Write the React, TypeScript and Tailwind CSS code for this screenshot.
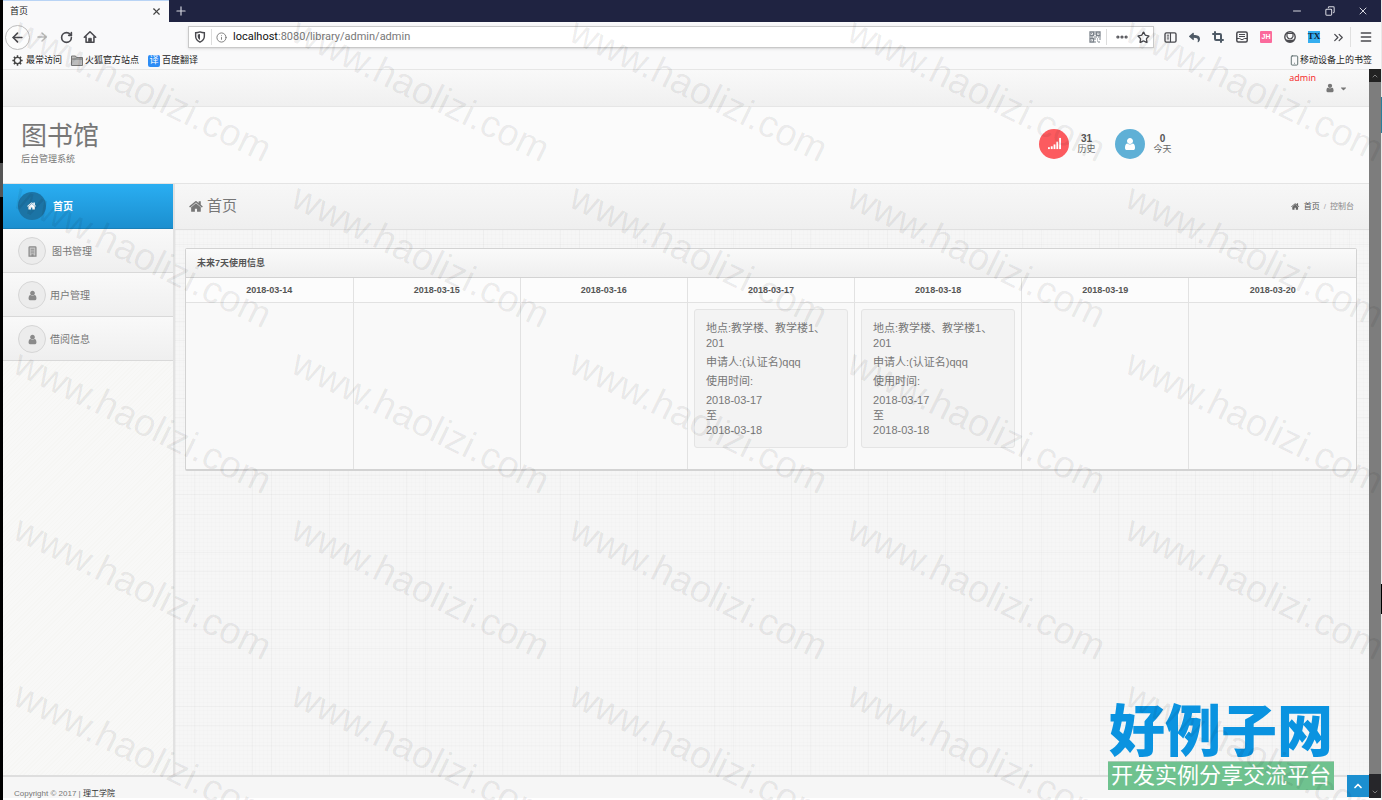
import type { ReactNode } from 'react';
import {
  ArrowLeft,
  ArrowRight,
  ChevronDown,
  ChevronsRight,
  ChevronUp,
  Copy,
  Crop,
  Ellipsis,
  Info,
  Menu,
  Minus,
  Plus,
  RotateCw,
  Smartphone,
  Star,
  X,
} from 'lucide-react';
import { FaCaretDown, FaReply } from 'react-icons/fa';

function HomeGlyph({ className }: { className: string }) {
  return (
    <svg viewBox="0 0 1792 1792" fill="currentColor" className={className} aria-hidden="true">
      <path d="M1408 992v480q0 26-19 45t-45 19h-384v-384h-256v384h-384q-26 0-45-19t-19-45v-480q0-1 .5-3t.5-3l575-474 575 474q1 2 1 6zm223-69l-62 74q-8 9-21 11h-3q-13 0-21-7l-692-577-692 577q-12 8-24 7-13-2-21-11l-62-74q-8-10-7-23.5t11-21.5l719-599q32-26 76-26t76 26l244 204v-195q0-14 9-23t23-9h192q14 0 23 9t9 23v408l219 182q10 8 11 21.5t-7 23.5z" />
    </svg>
  );
}

function UserGlyph({ className }: { className: string }) {
  return (
    <svg viewBox="0 0 1792 1792" fill="currentColor" className={className} aria-hidden="true">
      <path d="M1536 1399q0 109-62.5 187t-150.5 78h-854q-88 0-150.5-78t-62.5-187q0-85 8.5-160.5t31.5-152 58.5-131 94-89 134.5-34.5q131 128 313 128t313-128q76 0 134.5 34.5t94 89 58.5 131 31.5 152 8.5 160.5zm-256-887q0 159-112.5 271.5t-271.5 112.5-271.5-112.5-112.5-271.5 112.5-271.5 271.5-112.5 271.5 112.5 112.5 271.5z" />
    </svg>
  );
}

function SignalGlyph({ className }: { className: string }) {
  return (
    <svg viewBox="0 0 14 12" fill="currentColor" className={className} aria-hidden="true">
      <rect x="0" y="10" width="2" height="2" />
      <rect x="3" y="9" width="2" height="3" />
      <rect x="6" y="7" width="2" height="5" />
      <rect x="9" y="4" width="2" height="8" />
      <rect x="12" y="0" width="2" height="12" />
    </svg>
  );
}

function BookGlyph({ className }: { className: string }) {
  return (
    <svg viewBox="0 0 10 12" className={className} aria-hidden="true">
      <path d="M2 .8h6q.8 0 .8.8v9.6H1.2V1.6q0-.8.8-.8z" fill="#c9c9c9" stroke="currentColor" strokeWidth="1.4" />
      <path d="M3 3.500h4M3 5.500h4M3 7.500h4" stroke="currentColor" />
      <path d="M3.8 9h2.4v2.4H3.8z" fill="currentColor" />
    </svg>
  );
}

function ShieldIcon() {
  return (
    <svg viewBox="0 0 16 16" className="size-3" aria-hidden="true">
      <path d="M8 1.2c2 .8 3.800 1.100 5.800 1.200v4.600c0 3.700-2.300 6.300-5.800 7.800-3.500-1.500-5.800-4.100-5.800-7.800V2.400C4.200 2.300 6 2 8 1.200z" fill="none" stroke="currentColor" strokeWidth="1.900" />
      <path d="M8 4v8c-2-1.100-3-2.700-3-5V4.700z" fill="currentColor" />
    </svg>
  );
}

function HouseIcon() {
  return (
    <svg viewBox="0 0 16 16" className="size-[14px]" fill="none" stroke="currentColor" strokeWidth="1.800" strokeLinecap="round" strokeLinejoin="round" aria-hidden="true">
      <path d="M1.500 8.300L8 2l6.500 6.300M3.500 7.500V14h9V7.500" />
      <path d="M6.500 13.500v-4h3v4z" fill="currentColor" strokeWidth="1" />
    </svg>
  );
}

function GearIcon() {
  return (
    <svg viewBox="0 0 16 16" className="size-[11px]" fill="none" stroke="#444" aria-hidden="true">
      <circle cx="8" cy="8" r="4.600" strokeWidth="2" />
      <path
        d="M8 .5v2.500M8 13v2.500M.5 8H3M13 8h2.500M2.700 2.700l1.800 1.800M11.500 11.500l1.800 1.800M2.700 13.300l1.800-1.800M11.500 4.500l1.800-1.800"
        strokeWidth="2.200"
      />
    </svg>
  );
}

function QrIcon() {
  return (
    <svg viewBox="0 0 12 12" className="size-3" fill="none" stroke="#7b828a" aria-hidden="true">
      <path d="M1 1h3.500v3.500H1zM7.500 1H11v3.500H7.500zM1 7.500h3.500V11H1z" strokeWidth="1.300" />
      <path d="M6 0v4M0 6h4M5 6h3M9 6h3M6 7v2M6 10v2M8 8h1M10 8h2M8 10h1M10 10v2M2.500 2.200v.8M9.200 2.200v.8M2.500 8.800v.8" />
    </svg>
  );
}

function SidebarIcon() {
  return (
    <svg viewBox="0 0 14 12" className="h-[11px] w-[13px]" fill="none" stroke="currentColor" aria-hidden="true">
      <rect x="1" y="1" width="12" height="10" rx="1.500" strokeWidth="1.500" />
      <path d="M7 1v10" strokeWidth="1.200" />
      <path d="M3 3.500h2.500M3 5.500h2.500M3 7.500h2.500" />
    </svg>
  );
}

function ReaderIcon() {
  return (
    <svg viewBox="0 0 12 12" className="size-3" fill="none" stroke="currentColor" aria-hidden="true">
      <rect x=".8" y="1" width="10.400" height="10" rx="1.500" strokeWidth="1.500" />
      <path d="M3 3.500h6M3 5.500h6" />
      <path d="M1 7.500h2.500q2.500 2.500 5 0H11" />
    </svg>
  );
}

function AccountIcon() {
  return (
    <svg viewBox="0 0 12 12" className="size-3" aria-hidden="true">
      <circle cx="6" cy="6" r="5.200" fill="none" stroke="currentColor" strokeWidth="1.400" />
      <path d="M3 2.500h6v3q-1 2.500-3 2.500t-3-2.500z" fill="none" stroke="currentColor" strokeWidth="1.200" />
      <path d="M1.500 8.200q4.500 1.600 9 0L8.600 11H3.400z" fill="currentColor" />
    </svg>
  );
}

function FolderIcon() {
  return (
    <svg viewBox="0 0 12 11" className="h-[11px] w-3" aria-hidden="true">
      <path d="M.5 1h4l1 1.500h6v8H.5z" fill="#bdbdbd" stroke="#777" />
      <path d="M.5 4h11" stroke="#777" />
    </svg>
  );
}

function ToolButton({ label, children }: { label: string; children: ReactNode }) {
  return (
    <button type="button" aria-label={label} className="flex h-6 w-6 items-center justify-center">
      {children}
    </button>
  );
}

function TitleBar() {
  return (
    <div className="flex h-[22px] bg-[#1f2341]">
      <div className="flex w-[166px] items-center justify-between border-t border-[#b9d4f5] bg-[#f9f9fa] pr-[7px] pl-[7px]">
        <span className="text-[9px] text-[#222]">首页</span>
        <button type="button" aria-label="关闭标签页">
          <X className="size-[11px] text-[#444]" strokeWidth={2.5} />
        </button>
      </div>
      <button type="button" aria-label="新标签页" className="flex w-6 items-center justify-center pb-px">
        <Plus className="size-[14px] text-[#d5d6de]" />
      </button>
      <div className="ml-auto flex items-center gap-[22px] pr-3 pb-px text-[#d5d6de]">
        <button type="button" aria-label="最小化">
          <Minus className="size-3" />
        </button>
        <button type="button" aria-label="还原">
          <Copy className="size-[10px] -scale-x-100" strokeWidth={2.5} />
        </button>
        <button type="button" aria-label="关闭窗口">
          <X className="size-3" />
        </button>
      </div>
    </div>
  );
}

function Toolbar() {
  return (
    <div className="flex h-[30px] items-center bg-[#f9f9fa] text-[#4a4a4f]">
      <div className="flex w-[185px] shrink-0 items-center pl-[2px]">
        <button
          type="button"
          aria-label="后退"
          className="flex size-[25px] items-center justify-center rounded-full border border-[#bdbdbd] bg-[#fcfcfc]"
        >
          <ArrowLeft className="size-[15px]" strokeWidth={2.5} />
        </button>
        <ToolButton label="前进">
          <ArrowRight className="size-[14px] text-[#bbb]" strokeWidth={2.5} />
        </ToolButton>
        <ToolButton label="刷新">
          <RotateCw className="size-[13px]" strokeWidth={3} />
        </ToolButton>
        <ToolButton label="主页">
          <HouseIcon />
        </ToolButton>
      </div>
      <div className="flex h-[22px] flex-1 items-center border border-[#c9c9c9] bg-white pl-1 shadow-sm">
        <span className="px-px">
          <ShieldIcon />
        </span>
        <span className="mx-1 h-4 w-px bg-[#ddd]" />
        <Info className="size-[11px] text-[#777]" />
        <p className="ml-[6px] flex-1 font-['Roboto','Noto_Sans_CJK_SC',sans-serif] text-[11px] text-[#777]">
          <span className="text-[#111]">localhost</span>:8080/library/admin/admin
        </p>
        <QrIcon />
        <span className="mr-1 ml-[5px] h-4 w-px bg-[#ddd]" />
        <button type="button" aria-label="页面操作" className="flex w-[22px] justify-center">
          <Ellipsis className="size-[14px]" strokeWidth={3.5} />
        </button>
        <button type="button" aria-label="收藏" className="flex w-5 justify-center">
          <Star className="size-[13px]" strokeWidth={2.5} />
        </button>
      </div>
      <div className="ml-1 flex items-center">
        <ToolButton label="侧栏">
          <SidebarIcon />
        </ToolButton>
        <ToolButton label="撤销">
          <FaReply className="size-[11px] text-[#4f5a66]" />
        </ToolButton>
        <ToolButton label="截图">
          <Crop className="size-3 text-[#4f5a66]" strokeWidth={4} />
        </ToolButton>
        <ToolButton label="阅读">
          <ReaderIcon />
        </ToolButton>
        <ToolButton label="JH">
          <span className="flex size-3 items-center justify-center rounded-[1px] bg-[#fb6a9c] text-[7px] font-bold text-white">JH</span>
        </ToolButton>
        <ToolButton label="账户">
          <AccountIcon />
        </ToolButton>
        <ToolButton label="TX">
          <span className="flex size-3 items-center justify-center bg-[#35aef0] font-['Liberation_Serif',serif] text-[9px] font-bold text-[#10253a]">
            TX
          </span>
        </ToolButton>
        <ToolButton label="更多工具">
          <ChevronsRight className="size-[15px]" />
        </ToolButton>
        <span className="h-5 w-px bg-[#e0e0e0]" />
        <button type="button" aria-label="菜单" className="flex w-[30px] justify-center">
          <Menu className="size-[14px]" strokeWidth={2.5} />
        </button>
      </div>
    </div>
  );
}

function Bookmarks() {
  return (
    <nav className="flex h-[17px] items-center gap-[9px] bg-[#f9f9fa] pr-[9px] pl-[9px] text-[9px] text-[#1c1c1c]">
      <a href="#frequent" className="flex items-center gap-[3px]">
        <GearIcon />
        最常访问
      </a>
      <a href="#firefox" className="flex items-center gap-[2px]">
        <FolderIcon />
        火狐官方站点
      </a>
      <a href="#translate" className="flex items-center gap-[2px]">
        <span className="flex size-3 items-center justify-center rounded-[2px] bg-[#2d8cf5] text-white">译</span>
        百度翻译
      </a>
      <a href="#mobile" className="ml-auto flex items-center">
        <Smartphone className="size-[11px] text-[#566]" />
        移动设备上的书签
      </a>
    </nav>
  );
}

const menu = [
  { label: '图书管理', icon: <BookGlyph className="h-[11px] w-[9px]" />, gap: 'gap-[6px]' },
  { label: '用户管理', icon: <UserGlyph className="size-[11px]" />, gap: 'gap-1' },
  { label: '借阅信息', icon: <UserGlyph className="size-[11px]" />, gap: 'gap-1' },
];

function Sidebar() {
  return (
    <aside className="w-[172px] shrink-0 border-r-2 border-[#e2e2e2] bg-[repeating-linear-gradient(135deg,#f6f6f4_0px,#f6f6f4_1px,#f8f8f7_1px,#f8f8f7_3px)] text-[10px]">
      <a
        href="#home"
        className="flex h-[45px] items-center gap-[7px] border-b border-[#1a80b8] bg-gradient-to-b from-[#2aaef2] to-[#1b8fcf] pl-[15px] font-bold text-white"
      >
        <span className="flex size-7 items-center justify-center rounded-full bg-[#1c74a5]">
          <HomeGlyph className="size-[10px]" />
        </span>
        首页
      </a>
      {menu.map((item) => (
        <a
          key={item.label}
          href={`#${item.label}`}
          className={`flex h-[44px] items-center border-b border-[#d9d9d9] bg-gradient-to-b from-[#f9f9f9] to-[#efefef] pt-px pl-[15px] text-[#777] ${item.gap}`}
        >
          <span className="flex size-7 items-center justify-center rounded-full border border-[#d6d6d6] bg-[#ececec] text-[#8a8a8a]">
            {item.icon}
          </span>
          {item.label}
        </a>
      ))}
    </aside>
  );
}

const days = ['2018-03-14', '2018-03-15', '2018-03-16', '2018-03-17', '2018-03-18', '2018-03-19', '2018-03-20'];
const booked = ['2018-03-17', '2018-03-18'];

function Booking() {
  return (
    <div className="flex flex-col gap-1 rounded-[3px] border border-[#e4e4e4] bg-[#f3f3f3] px-[11px] pt-[11px] pb-[9px] text-[11px] leading-[15px] text-[#777]">
      <p>
        地点:教学楼、教学楼1、
        <br />
        201
      </p>
      <p>申请人:(认证名)qqq</p>
      <p>使用时间:</p>
      <p>
        2018-03-17
        <br />至<br />
        2018-03-18
      </p>
    </div>
  );
}

function Schedule() {
  return (
    <section className="rounded-[2px] border border-b-2 border-[#d3d3d3] bg-[#f9f9f9]">
      <h2 className="flex h-[29px] items-center border-b border-[#d3d3d3] bg-gradient-to-b from-[#fafafa] to-[#efefef] pt-px pl-[11px] text-[9px] font-bold text-[#555]">
        未来7天使用信息
      </h2>
      <table className="w-full table-fixed border-collapse">
        <thead>
          <tr className="h-6 bg-[#fcfcfc] text-[9px] text-[#555]">
            {days.map((day) => (
              <th key={day} className="border-r border-b border-[#e2e2e2] p-0 pt-[2px] font-bold last:border-r-0">
                {day}
              </th>
            ))}
          </tr>
        </thead>
        <tbody>
          <tr className="h-[167px]">
            {days.map((day) => (
              <td key={day} className="border-r border-[#e2e2e2] p-[6px] align-top last:border-r-0">
                {booked.includes(day) && <Booking />}
              </td>
            ))}
          </tr>
        </tbody>
      </table>
    </section>
  );
}

function Stat({ value, label, color, children }: { value: string; label: string; color: string; children: ReactNode }) {
  return (
    <div className="flex items-center gap-2">
      <span className={`flex size-[30px] items-center justify-center rounded-full text-white ${color}`}>{children}</span>
      <p className="flex w-[19px] flex-col items-center text-[9px] leading-[11px] text-[#666]">
        <strong className="text-[10px] text-[#555]">{value}</strong>
        <span className="whitespace-nowrap">{label}</span>
      </p>
    </div>
  );
}

function AdminPage() {
  return (
    <div className="flex min-w-0 flex-1 flex-col">
      <div className="flex h-[38px] justify-end border-y border-[#e6e6e6] bg-gradient-to-b from-[#f9f9f9] to-[#f0f0f0] pr-[21px]">
        <span className="pt-[2px] font-['Open_Sans',sans-serif] text-[9px] leading-[11px] text-[#f52222]">admin</span>
        <button type="button" aria-label="用户菜单" className="mt-[13px] ml-[9px] flex h-[10px] items-center gap-1 text-[#777]">
          <UserGlyph className="size-[10px]" />
          <FaCaretDown className="size-[9px]" />
        </button>
      </div>
      <header className="flex h-[77px] items-center justify-between border-b border-[#e4e4e4] bg-[#fbfbfb] pb-[3px]">
        <div className="pl-[18px] text-[#777]">
          <h1 className="text-[26px] leading-[31px]">图书馆</h1>
          <p className="text-[9px] leading-[14px]">后台管理系统</p>
        </div>
        <div className="flex gap-[19px] pr-[197px]">
          <Stat value="31" label="历史" color="bg-[#fc5b5f]">
            <SignalGlyph className="size-[13px]" />
          </Stat>
          <Stat value="0" label="今天" color="bg-[#5fb0d6]">
            <UserGlyph className="size-[14px]" />
          </Stat>
        </div>
      </header>
      <div className="flex flex-1">
        <Sidebar />
        <main className="flex min-w-0 flex-1 flex-col">
          <div className="flex h-[46px] items-center justify-between border-b border-[#e0e0e0] bg-gradient-to-b from-[#f7f7f7] to-[#efefef] pr-[15px] pl-[14px]">
            <h2 className="flex items-center gap-[3px] text-[15px] text-[#777]">
              <HomeGlyph className="size-[15px]" />
              首页
            </h2>
            <nav className="flex items-center gap-1 text-[8px] text-[#888]">
              <HomeGlyph className="size-[9px] text-[#666]" />
              <a href="#home" className="text-[#555]">
                首页
              </a>
              <span className="text-[#aaa]">/</span>
              <span>控制台</span>
            </nav>
          </div>
          <div className="flex-1 bg-[#f6f6f6] bg-[linear-gradient(to_right,rgba(0,0,0,0.022)_1px,transparent_1px,transparent_19px,rgba(0,0,0,0.018)_19px,rgba(0,0,0,0.018)_20px,transparent_20px),linear-gradient(to_bottom,transparent_14px,rgba(0,0,0,0.022)_14px,rgba(0,0,0,0.022)_15px,transparent_15px,transparent_33px,rgba(0,0,0,0.022)_33px,rgba(0,0,0,0.022)_34px,transparent_34px,transparent_53px,rgba(0,0,0,0.015)_53px,rgba(0,0,0,0.015)_54px,transparent_54px),linear-gradient(to_right,rgba(0,0,0,0.008)_1px,transparent_1px),linear-gradient(to_bottom,rgba(0,0,0,0.008)_1px,transparent_1px)] bg-[size:77px_77px,77px_77px,4px_4px,4px_4px] pt-[18px] pr-3 pl-[10px]">
            <Schedule />
          </div>
        </main>
      </div>
      <footer className="flex items-start justify-between border-t-2 border-[#dedede] bg-[#f6f6f6]">
        <p className="pt-[13px] pl-[11px] text-[8px] leading-[8px] text-[#777]">
          Copyright © 2017 | <a href="#school" className="text-[#333]">理工学院</a>
        </p>
        <button type="button" aria-label="返回顶部" className="-mt-[2px] flex h-[22px] w-[22px] items-center justify-center bg-[#1b8fd0] text-white">
          <ChevronUp className="size-3" strokeWidth={3.5} />
        </button>
      </footer>
    </div>
  );
}

function Watermarks() {
  return (
    <div className="pointer-events-none absolute inset-0 overflow-hidden select-none" aria-hidden="true">
      <div className="grid auto-rows-[166px] grid-cols-[repeat(5,278px)] pt-[11px] pl-[25px]">
        {Array.from({ length: 25 }, (_, i) => (
          <span key={i} className="origin-top-left rotate-[26deg] text-[38px] leading-[38px] whitespace-nowrap text-black/[0.07]">
            www.haolizi.com
          </span>
        ))}
      </div>
    </div>
  );
}

export default function App() {
  return (
    <div className="relative flex min-h-screen bg-white font-['Liberation_Sans','Noto_Sans_CJK_SC',sans-serif]">
      <div className="w-[3px] shrink-0 bg-black pt-[163px]">
        <div className="h-[34px] bg-[#555]" />
      </div>
      <div className="flex min-w-0 flex-1 flex-col">
        <TitleBar />
        <Toolbar />
        <Bookmarks />
        <div className="flex flex-1 pb-[2px]">
          <AdminPage />
          <div className="flex w-3 shrink-0 flex-col justify-between bg-[#7d7d7d] text-[#aaa]">
            <span className="flex h-[13px] items-center justify-center bg-[#222]">
              <ChevronUp className="size-2" />
            </span>
            <span className="flex h-6 items-end justify-center bg-[#26262a] pb-[2px]">
              <ChevronDown className="size-2" />
            </span>
          </div>
        </div>
      </div>
      <div className="flex w-px shrink-0 flex-col bg-[#e8e8e8] pt-[97px]">
        <div className="h-9 bg-[#2a7f9c]" />
        <div className="mt-[451px] h-[30px] bg-black" />
      </div>
      <div className="absolute right-12 bottom-[10px] w-[226px] text-center whitespace-nowrap">
        <p className="mb-1 font-['Noto_Sans_CJK_SC',sans-serif] text-[56px] leading-[60px] font-black text-[#0a93e0]">好例子网</p>
        <p className="border-t border-[#a9c9b4] bg-[#6fc28f] text-[22px] leading-[28px] text-white">开发实例分享交流平台</p>
      </div>
      <Watermarks />
    </div>
  );
}
